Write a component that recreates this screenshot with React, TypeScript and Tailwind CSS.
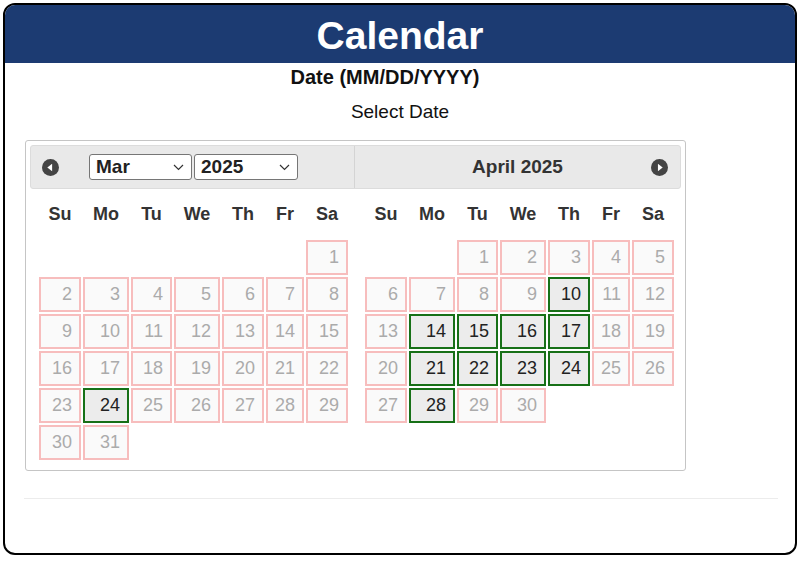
import React from "react";

const COLS = "grid grid-cols-[42px_46px_41px_46px_42px_38px_42px] gap-[2px]";
const DAYS = ["Su", "Mo", "Tu", "We", "Th", "Fr", "Sa"];

type Month = { offset: number; length: number; open: number[] };

const march: Month = { offset: 6, length: 31, open: [24] };
const april: Month = { offset: 2, length: 30, open: [10, 14, 15, 16, 17, 21, 22, 23, 24, 28] };

const NavIcon = ({ dir }: { dir: "prev" | "next" }) => (
  <svg width="17" height="17" viewBox="0 0 16 16">
    <circle cx="8" cy="8" r="8" fill="#444" />
    {dir === "prev" ? (
      <path d="M5 8 L9.5 4.5 L9.5 11.5 Z" fill="#fff" />
    ) : (
      <path d="M11 8 L6.5 4.5 L6.5 11.5 Z" fill="#fff" />
    )}
  </svg>
);

const FakeSelect = ({ value, width }: { value: string; width: string }) => (
  <div
    className={`${width} h-[26px] flex items-center justify-between pl-[6px] pr-[7px] bg-white border border-[#767676] rounded-[3px] text-[19px] font-bold text-[#222]`}
  >
    <span>{value}</span>
    <svg width="11" height="7" viewBox="0 0 11 7">
      <path d="M1 1 L5.5 5.5 L10 1" stroke="#333" strokeWidth="1.2" fill="none" />
    </svg>
  </div>
);

const MonthGrid = ({ month }: { month: Month }) => {
  const cells: (number | null)[] = [];
  for (let i = 0; i < month.offset; i++) cells.push(null);
  for (let d = 1; d <= month.length; d++) cells.push(d);
  return (
    <div>
      <div className={`${COLS} h-[30px] mt-[10px] items-center`}>
        {DAYS.map((d) => (
          <div key={d} className="text-center text-[18px] font-bold text-[#333]">
            {d}
          </div>
        ))}
      </div>
      <div className={`${COLS} auto-rows-[35px] gap-y-[2px] mt-[11px]`}>
        {cells.map((d, i) => {
          if (d === null) return <div key={i} />;
          const open = month.open.includes(d);
          return (
            <div
              key={i}
              className={
                open
                  ? "flex items-center justify-end pr-[7px] border-2 border-[#177017] bg-[#ececec] text-[18px] text-[#222]"
                  : "flex items-center justify-end pr-[7px] border-2 border-[#f7bdbd] bg-[#fafafa] text-[18px] text-[#ababab]"
              }
            >
              {d}
            </div>
          );
        })}
      </div>
    </div>
  );
};

export default function App() {
  return (
    <div className="w-[800px] h-[562px] bg-white p-[3px] font-['Liberation_Sans',Arial,sans-serif]">
      <div className="h-[552px] border-2 border-black rounded-[12px] overflow-hidden flex flex-col">
        <div className="h-[58px] bg-[#1c3b72] flex items-center justify-center">
          <h1 className="text-[39px] font-bold text-white leading-none mt-[2px]">Calendar</h1>
        </div>
        <p className="mt-[2px] h-[24px] leading-[24px] text-center pr-[30px] text-[20px] font-bold text-[#111]">
          Date (MM/DD/YYYY)
        </p>
        <p className="mt-[11px] h-[24px] leading-[24px] text-center text-[19px] text-[#111]">
          Select Date
        </p>
        <div className="ml-[20px] mt-[16px] w-[661px] h-[331px] border border-[#c5c5c5] rounded-[3px] p-[4px]">
          <div className="h-[44px] bg-[#e9e9e9] border border-[#dcdcdc] rounded-[3px] flex">
            <div className="w-[324px] flex items-center border-r border-[#d4d4d4]">
              <div className="ml-[11px] w-[17px] h-[17px]">
                <NavIcon dir="prev" />
              </div>
              <div className="ml-[30px] flex gap-[2px]">
                <FakeSelect value="Mar" width="w-[103px]" />
                <FakeSelect value="2025" width="w-[104px]" />
              </div>
            </div>
            <div className="flex-1 flex items-center relative">
              <span className="flex-1 text-center text-[19px] font-bold text-[#333]">April 2025</span>
              <div className="absolute right-[12px] top-[13px] w-[17px] h-[17px]">
                <NavIcon dir="next" />
              </div>
            </div>
          </div>
          <div className="flex">
            <div className="w-[325px] pl-[9px]">
              <MonthGrid month={march} />
            </div>
            <div className="pl-[10px]">
              <MonthGrid month={april} />
            </div>
          </div>
        </div>
        <div className="mt-[27px] mx-[19px] mr-[17px] h-px bg-[#ececec]" />
      </div>
    </div>
  );
}
